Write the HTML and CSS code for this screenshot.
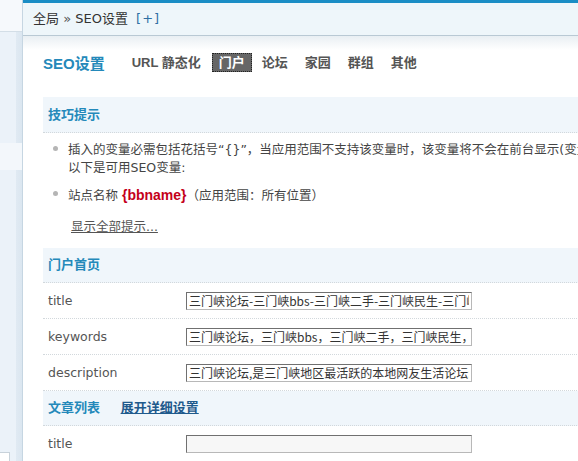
FILE: index.html
```html
<!DOCTYPE html>
<html lang="zh-CN">
<head>
<meta charset="utf-8">
<title>SEO设置</title>
<link rel="stylesheet" href="styles.css">
</head>
<body>
<div class="page">
  <aside class="side">
    <div class="side-top"></div>
    <div class="side-item"></div>
    <div class="side-box"></div>
  </aside>
  <main class="main">
    <div class="crumb">全局 <span class="raquo">»</span> SEO设置 <a class="add">[+]</a></div>
    <div class="shade"></div>
    <div class="content">
      <div class="tabs">
        <h2 class="title">SEO设置</h2>
        <a class="tab">URL 静态化</a>
        <a class="tab on">门户</a>
        <a class="tab">论坛</a>
        <a class="tab">家园</a>
        <a class="tab">群组</a>
        <a class="tab">其他</a>
      </div>

      <div class="sec">技巧提示</div>
      <div class="tips">
        <ul class="tiplist">
          <li>插入的变量必需包括花括号“{}”，当应用范围不支持该变量时，该变量将不会在前台显示(变量值为空)，<br>以下是可用SEO变量:</li>
          <li>站点名称 <b class="var">{bbname}</b>（应用范围：所有位置）</li>
        </ul>
        <a class="showall">显示全部提示...</a>
      </div>

      <div class="sec">门户首页</div>
      <div class="row"><span class="lbl">title</span><input class="txt" value="三门峡论坛-三门峡bbs-三门峡二手-三门峡民生-三门峡房产"></div>
      <div class="row"><span class="lbl">keywords</span><input class="txt" value="三门峡论坛，三门峡bbs，三门峡二手，三门峡民生，三门峡房产"></div>
      <div class="row"><span class="lbl">description</span><input class="txt" value="三门峡论坛,是三门峡地区最活跃的本地网友生活论坛:"></div>

      <div class="sec">文章列表 <a class="expand">展开详细设置</a></div>
      <div class="row"><span class="lbl">title</span><input class="txt empty" value=""></div>
    </div>
  </main>
</div>
</body>
</html>
```

FILE: styles.css
```css
html, body {
  margin: 0;
  padding: 0;
  background: #fff;
}
body {
  font-family: "DejaVu Sans", "Noto Sans CJK SC", sans-serif;
  font-size: 12.5px;
  color: #444;
  overflow: hidden;
}
.page {
  display: flex;
  height: 461px;
  overflow: hidden;
}
.side {
  width: 22px;
  flex: none;
  display: flex;
  flex-direction: column;
  background: linear-gradient(to right, #ebf2f9 0, #ebf2f9 16px, #e0eaf3 16px, #dbe6f0 22px);
  border-right: 1px solid #c6d6e2;
}
.side-top {
  height: 31px;
  background: #f6f9fc;
  border-bottom: 1px solid #d3dee7;
}
.side-item {
  height: 27px;
  margin-top: 111px;
  background: #f3f7fb;
}
.side-box {
  margin-top: auto;
  height: 8px;
  width: 9px;
  border: 1px solid #c8d2da;
  border-bottom: none;
  border-left: none;
  background: #fff;
}
.main {
  flex: 1;
  min-width: 0;
  overflow: hidden;
}
.crumb {
  border-top: 3px solid #1a8dc5;
  border-bottom: 1px solid #b9c9d4;
  background: #eef6fa;
  height: 32px;
  line-height: 32px;
  padding-left: 10px;
  font-size: 13px;
  color: #333;
  white-space: nowrap;
}
.raquo {
  color: #555;
}
.add {
  color: #2f6fa3;
  margin-left: 4px;
  letter-spacing: 1px;
}
.shade {
  height: 14px;
  background: linear-gradient(to bottom, #e9eff3, #fff);
}
.content {
  padding-left: 20px;
  width: 560px;
}
.tabs {
  display: flex;
  align-items: center;
  gap: 3px;
  height: 19px;
  margin-top: 3px;
  white-space: nowrap;
}
.title {
  margin: 0 17px 0 0;
  font-family: "Liberation Sans", "Noto Sans CJK SC", sans-serif;
  font-size: 15px;
  font-weight: bold;
  color: #2489ba;
}
.tab {
  font-family: "Liberation Sans", "Noto Sans CJK SC", sans-serif;
  font-size: 13px;
  font-weight: bold;
  color: #555;
  padding: 0 7px;
  height: 19px;
  line-height: 19px;
  box-sizing: border-box;
}
.tab.on {
  background: #666;
  color: #fff;
  border: 1px dotted #222;
  line-height: 17px;
  padding: 0 6px;
  margin-left: 1px;
}
.sec {
  margin-top: 25px;
  height: 34px;
  line-height: 34px;
  padding-left: 5px;
  background: #f0f6fb;
  border-bottom: 1px dotted #d2d8dc;
  font-family: "Liberation Sans", "Noto Sans CJK SC", sans-serif;
  font-size: 13px;
  font-weight: bold;
  color: #2489ba;
  white-space: nowrap;
}
.tips + .sec,
.row + .sec {
  margin-top: 0;
}
.tabs + .sec {
  height: 35px;
  line-height: 35px;
}
.expand {
  color: #1f5a8c;
  text-decoration: underline;
  margin-left: 17px;
}
.tips {
  padding: 8px 0 12px 25px;
}
.tiplist {
  list-style: none;
  margin: 0;
  padding: 0;
}
.tiplist li {
  position: relative;
  line-height: 18px;
  white-space: nowrap;
  margin-bottom: 9px;
}
.tiplist li::before {
  content: "";
  position: absolute;
  left: -15px;
  top: 5px;
  width: 5px;
  height: 5px;
  border-radius: 50%;
  background: #b5b5b5;
}
.var {
  font-family: "Liberation Sans", sans-serif;
  font-size: 14px;
  color: #c4001a;
}
.showall {
  display: inline-block;
  margin-top: 4px;
  margin-left: 3px;
  line-height: 18px;
  color: #555;
  text-decoration: underline;
}
.row {
  display: flex;
  align-items: center;
  height: 35px;
  border-bottom: 1px dotted #d2d8dc;
  padding-left: 5px;
}
.lbl {
  width: 138px;
  color: #555;
  flex: none;
}
.txt {
  width: 286px;
  height: 18px;
  box-sizing: border-box;
  margin: 0;
  padding: 0 2px;
  border: 1px solid;
  border-color: #707070 #b8b8b8 #b8b8b8 #707070;
  background: #fff;
  font-family: "Noto Sans CJK SC", "DejaVu Sans", sans-serif;
  font-size: 12px;
  color: #333;
  outline: none;
}
.txt.empty {
  background: #f7f7f7;
}
```
